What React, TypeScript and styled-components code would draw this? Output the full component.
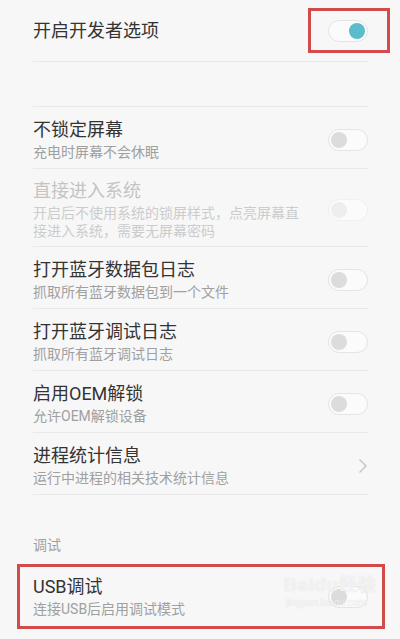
import styled, { createGlobalStyle } from "styled-components";

const GlobalStyle = createGlobalStyle`
	html, body {
		margin: 0;
		padding: 0;
		background: #f7f7f7;
	}
	* {
		box-sizing: border-box;
	}
`;

const Page = styled.div`
	width: 400px;
	height: 639px;
	overflow: hidden;
	padding: 0 32px 0 33px;
	background: #f7f7f7;
	font-family: Roboto, "Noto Sans CJK SC", sans-serif;
	position: relative;
`;

const Group = styled.div<{ $top?: boolean }>`
	border-top: ${(props) => (props.$top ? "1px solid #e9e9e9" : "none")};
`;

const Row = styled.div<{ $single?: boolean; $mark?: boolean; $last?: boolean }>`
	display: flex;
	align-items: center;
	gap: 22px;
	padding: ${(props) => (props.$single ? "20px 0 19px" : "11px 0 6px")};
	min-height: ${(props) => (props.$single ? "61px" : "62px")};
	border-bottom: ${(props) => (props.$last ? "none" : "1px solid #e9e9e9")};
	position: relative;
	&::before {
		content: "";
		display: ${(props) => (props.$mark ? "block" : "none")};
		position: absolute;
		top: 1px;
		bottom: -4px;
		left: -16px;
		right: -17px;
		border: 3px solid #d24a4a;
		pointer-events: none;
	}
`;

const Text = styled.div`
	flex: 1;
	min-width: 0;
`;

const Title = styled.div<{ $disabled?: boolean }>`
	font-size: 18px;
	line-height: 22px;
	color: ${(props) => (props.$disabled ? "#c4c4c4" : "#333333")};
`;

const Subtitle = styled.div<{ $disabled?: boolean }>`
	margin-top: 2px;
	font-size: 14px;
	line-height: 18px;
	color: ${(props) => (props.$disabled ? "#cccccc" : "#a0a0a0")};
`;

const ToggleWrap = styled.div<{ $mark?: boolean }>`
	position: relative;
	flex: none;
	&::after {
		content: "";
		display: ${(props) => (props.$mark ? "block" : "none")};
		position: absolute;
		top: -12px;
		bottom: -11px;
		left: -20px;
		right: -22px;
		border: 3px solid #d24a4a;
	}
`;

const Track = styled.div<{ $on?: boolean; $disabled?: boolean }>`
	width: 40px;
	height: 22px;
	border-radius: 11px;
	border: 1px solid ${(props) => (props.$disabled ? "#f0f0f0" : "#e4e4e4")};
	background: #fbfbfb;
	display: flex;
	align-items: center;
	justify-content: ${(props) => (props.$on ? "flex-end" : "flex-start")};
	padding: 0 2px;
`;

const Knob = styled.div<{ $on?: boolean; $disabled?: boolean }>`
	width: 16px;
	height: 16px;
	border-radius: 50%;
	background: ${(props) =>
		props.$on ? "#5bbdcb" : props.$disabled ? "#eeeeee" : "#dcdcdc"};
`;

const Gap = styled.div`
	height: 44px;
`;

const SectionLabel = styled.div`
	padding: 40px 0 8px;
	font-size: 14px;
	line-height: 20px;
	color: #a0a0a0;
`;

const Chevron = styled.svg`
	flex: none;
	width: 10px;
	height: 16px;
`;

const Watermark = styled.div`
	position: absolute;
	left: 284px;
	top: 574px;
	display: flex;
	flex-direction: column;
	align-items: flex-start;
	pointer-events: none;
	color: rgba(255, 255, 255, 0.7);
	text-shadow: 0 0 1px rgba(170, 170, 170, 0.45);
`;

const MarkTitle = styled.div`
	font-family: "Liberation Sans", "Noto Sans CJK SC", sans-serif;
	font-size: 18px;
	font-weight: bold;
	line-height: 22px;
	letter-spacing: 1px;
`;

const MarkUrl = styled.div`
	font-family: "Liberation Sans", sans-serif;
	font-size: 10px;
	line-height: 14px;
	margin-left: 2px;
`;

function Toggle({ on, disabled, mark }: { on?: boolean; disabled?: boolean; mark?: boolean }) {
	return (
		<ToggleWrap $mark={mark}>
			<Track $on={on} $disabled={disabled}>
				<Knob $on={on} $disabled={disabled} />
			</Track>
		</ToggleWrap>
	);
}

interface IItem {
	title: string;
	sub: string;
	disabled?: boolean;
}

const items: IItem[] = [
	{ title: "不锁定屏幕", sub: "充电时屏幕不会休眠" },
	{
		title: "直接进入系统",
		sub: "开启后不使用系统的锁屏样式，点亮屏幕直接进入系统，需要无屏幕密码",
		disabled: true,
	},
	{ title: "打开蓝牙数据包日志", sub: "抓取所有蓝牙数据包到一个文件" },
	{ title: "打开蓝牙调试日志", sub: "抓取所有蓝牙调试日志" },
	{ title: "启用OEM解锁", sub: "允许OEM解锁设备" },
];

function App() {
	return (
		<>
			<GlobalStyle />
			<Page>
				<Group>
					<Row $single>
						<Text>
							<Title>开启开发者选项</Title>
						</Text>
						<Toggle on mark />
					</Row>
				</Group>
				<Gap />
				<Group $top>
					{items.map((item) => (
						<Row key={item.title}>
							<Text>
								<Title $disabled={item.disabled}>{item.title}</Title>
								<Subtitle $disabled={item.disabled}>{item.sub}</Subtitle>
							</Text>
							<Toggle disabled={item.disabled} />
						</Row>
					))}
					<Row>
						<Text>
							<Title>进程统计信息</Title>
							<Subtitle>运行中进程的相关技术统计信息</Subtitle>
						</Text>
						<Chevron viewBox="0 0 10 16">
							<polyline points="1.5,1.5 8,8 1.5,14.5" fill="none" stroke="#c2c2c2" strokeWidth="1.3" />
						</Chevron>
					</Row>
				</Group>
				<SectionLabel>调试</SectionLabel>
				<Group>
					<Row $mark $last>
						<Text>
							<Title>USB调试</Title>
							<Subtitle>连接USB后启用调试模式</Subtitle>
						</Text>
						<Toggle />
					</Row>
				</Group>
				<Watermark>
					<MarkTitle>Baidu经验</MarkTitle>
					<MarkUrl>jingyan.baidu.com</MarkUrl>
				</Watermark>
			</Page>
		</>
	);
}

export default App;
